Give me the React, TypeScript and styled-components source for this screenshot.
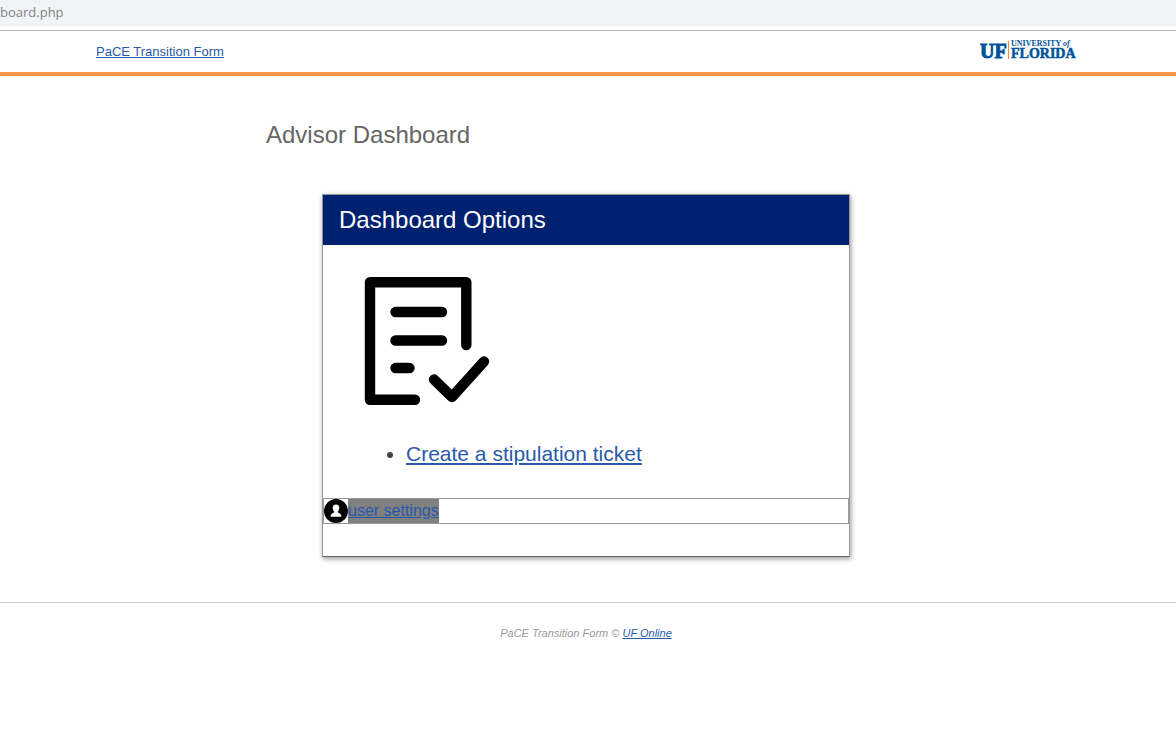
import React from 'react';
import styled, { createGlobalStyle } from 'styled-components';

const GlobalStyle = createGlobalStyle`
  *, *::before, *::after { box-sizing: border-box; }
  body {
    margin: 0;
    background: #fff;
    color: #444;
    font-family: "Liberation Sans", Arial, sans-serif;
    font-size: 16px;
    line-height: 24px;
  }
`;

const AddressStrip = styled.div`
  padding-bottom: 2px;
  margin-bottom: 4px;
  background: #f1f3f4;
  color: #80868b;
  font: 13px/24px "Open Sans", "Noto Sans", sans-serif;
`;

const Link = styled.a`
  color: #285aa9;
  text-decoration: underline;
`;

const Header = styled.header`
  border-top: 1px solid #b5b2b8;
  border-bottom: 4px solid #f99848;
  padding-right: 4px;
`;

const HeaderInner = styled.div`
  display: flex;
  align-items: center;
  justify-content: space-between;
  width: 100%;
  max-width: 980px;
  height: 41px;
  margin: 0 auto;
  font-size: 13px;
`;

const Logo = styled.svg`
  display: block;
  width: 96px;
  height: 24px;
  margin-bottom: 4px;
  font-family: "Liberation Serif", "Times New Roman", serif;
  font-weight: bold;
  fill: #00529b;
`;

const Main = styled.main`
  padding: 44px 4px 45px 0;
`;

const Content = styled.div`
  width: 100%;
  max-width: 640px;
  margin: 0 auto;
`;

const Title = styled.h1`
  margin: 0 0 44px;
  color: #666;
  font-size: 24px;
  font-weight: 400;
  line-height: 30px;
`;

const Card = styled.section`
  margin: 0 56px;
  padding-bottom: 32px;
  border: 1px solid #999;
  border-bottom-color: #666;
  box-shadow: 1px 2px 5px rgba(0, 0, 0, 0.4);
`;

const CardTitle = styled.h2`
  margin: 0;
  padding: 10px 16px;
  background: #00216f;
  color: #fff;
  font-size: 24px;
  font-weight: 400;
  line-height: 30px;
`;

const FormIcon = styled.svg`
  display: block;
  width: 128px;
  height: 128px;
  margin: 32px 0 33px 40px;
  fill: none;
  stroke: #000;
  stroke-width: 10.4;
  stroke-linecap: round;
  stroke-linejoin: round;
`;

const Options = styled.ul`
  margin: 0 0 28px;
  padding-left: 83px;
  font-size: 21px;
  line-height: 32px;
`;

const SettingsRow = styled.div`
  display: flex;
  align-items: center;
  border: 1px solid #999;
`;

const UserIcon = styled.svg`
  display: block;
  width: 24px;
  height: 24px;
`;

const SettingsLink = styled(Link)`
  background: #808080;
`;

const Footer = styled.footer`
  padding: 20px 4px 20px 0;
  border-top: 1px solid #ccc;
  color: #999;
  font-size: 11px;
  font-style: italic;
  line-height: 20px;
  text-align: center;
`;

export default function App() {
  return (
    <>
      <GlobalStyle />
      <AddressStrip>board.php</AddressStrip>
      <Header>
        <HeaderInner>
          <Link href="#">PaCE Transition Form</Link>
          <Logo viewBox="0 0 96 24" role="img" aria-label="University of Florida">
            <text x="0" y="20" fontSize="20" stroke="#00529b" strokeWidth="1">UF</text>
            <path d="M28.5 3V21" stroke="#f58a42" />
            <text x="31" y="8" fontSize="8">UNIVERSITY <tspan fontStyle="italic">of</tspan></text>
            <text x="31" y="20" fontSize="14" stroke="#00529b" strokeWidth="0.5">FLORIDA</text>
          </Logo>
        </HeaderInner>
      </Header>
      <Main>
        <Content>
          <Title>Advisor Dashboard</Title>
          <Card>
            <CardTitle>Dashboard Options</CardTitle>
            <FormIcon viewBox="0 0 128 128" aria-hidden="true">
              <path d="M52 122.7H7V5.3H103.3V68" />
              <path d="M32.5 35H79M32.5 63.5H79M32.5 91H46.5" />
              <path d="M71 102.5L89 120L121 84.5" />
            </FormIcon>
            <Options>
              <li><Link href="#">Create a stipulation ticket</Link></li>
            </Options>
            <SettingsRow>
              <UserIcon viewBox="0 0 24 24" aria-hidden="true">
                <circle cx="12" cy="12" r="12" />
                <path
                  d="M12 5.5C9.6 5.5 8.6 7 8.7 9C8.8 10.6 9.4 11.8 10.2 12.5V13.6C8 14.3 6.7 15.2 6.7 17.7H17.3C17.3 15.2 16 14.3 13.8 13.6V12.5C14.6 11.8 15.2 10.6 15.3 9C15.4 7 14.4 5.5 12 5.5Z"
                  fill="#fff"
                />
              </UserIcon>
              <SettingsLink href="#">user settings</SettingsLink>
            </SettingsRow>
          </Card>
        </Content>
      </Main>
      <Footer>
        PaCE Transition Form © <Link href="#">UF Online</Link>
      </Footer>
    </>
  );
}
